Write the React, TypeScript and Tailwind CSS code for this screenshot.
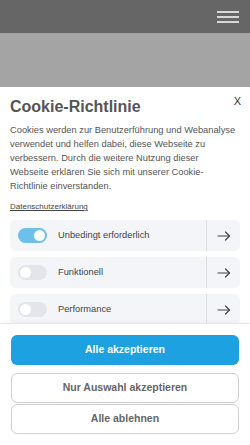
const rows = [
  { label: 'Unbedingt erforderlich', on: true },
  { label: 'Funktionell', on: false },
  { label: 'Performance', on: false },
];

function Toggle({ on }: { on: boolean }) {
  return (
    <div
      className={
        on
          ? 'w-[29px] h-[15px] rounded-full bg-[#6cc0ea] flex items-center justify-end px-[2px]'
          : 'w-[29px] h-[15px] rounded-full bg-[#e3e5eb] flex items-center justify-start px-[2px]'
      }
    >
      <div className="w-[11px] h-[11px] rounded-full bg-white" />
    </div>
  );
}

function Arrow() {
  return (
    <svg width="14" height="10" viewBox="0 0 14 10" fill="none" stroke="#444444" strokeWidth="1.2" strokeLinecap="round" strokeLinejoin="round">
      <path d="M1 5h11.5" />
      <path d="M8.5 1l4 4-4 4" />
    </svg>
  );
}

export default function App() {
  return (
    <div className="h-[445px] w-[250px] flex flex-col overflow-hidden font-['Liberation_Sans',Arial,sans-serif]">
      {/* Seitenkopf */}
      <div className="h-[33px] bg-[#666666] flex items-center justify-end pr-[11px] shrink-0">
        <div className="flex flex-col gap-[3px] w-[22px]">
          <div className="h-[2px] bg-[#d8d8d8]" />
          <div className="h-[2px] bg-[#d8d8d8]" />
          <div className="h-[2px] bg-[#d8d8d8]" />
        </div>
      </div>
      <div className="h-[54px] bg-[#a4a4a4] shrink-0" />

      {/* Cookie-Dialog */}
      <div className="flex-1 bg-white flex flex-col min-h-0">
        <div className="flex-1 min-h-0 overflow-hidden px-[10px] pt-[9px]">
          <div className="flex items-start justify-between">
            <h1 className="text-[16px] leading-[22px] font-bold text-[#555555]">Cookie-Richtlinie</h1>
            <button className="text-[11px] leading-none text-[#333333] mr-[-1px]">X</button>
          </div>
          <p className="mt-[5px] mr-[2px] text-[9.3px] leading-[14px] text-[#555555]">
            Cookies werden zur Benutzerführung und Webanalyse verwendet und helfen dabei, diese Webseite zu
            verbessern. Durch die weitere Nutzung dieser Webseite erklären Sie sich mit unserer Cookie-Richtlinie
            einverstanden.
          </p>
          <a className="block mt-[8px] text-[8px] leading-[12px] text-[#444444] underline">Datenschutzerklärung</a>

          <div className="mt-[7px] flex flex-col gap-[6px]">
            {rows.map((r) => (
              <div key={r.label} className="h-[31px] rounded-[6px] bg-[#f4f5f8] flex items-center">
                <div className="flex-1 flex items-center gap-[11px] pl-[8px]">
                  <Toggle on={r.on} />
                  <span className="text-[9.3px] text-[#444444]">{r.label}</span>
                </div>
                <div className="w-px self-stretch bg-[#dcdde2]" />
                <div className="w-[33px] flex items-center justify-center">
                  <Arrow />
                </div>
              </div>
            ))}
          </div>
        </div>

        {/* Buttons */}
        <div className="shrink-0 h-[122px] border-t border-[#e8e8e8] px-[11px] pt-[11px] flex flex-col shadow-[0_-2px_4px_rgba(0,0,0,0.03)]">
          <button className="h-[30px] rounded-[6px] bg-[#1ea1e0] text-white text-[10.5px] font-bold">
            Alle akzeptieren
          </button>
          <button className="mt-[8px] h-[30px] rounded-[6px] border border-[#d0d0d4] text-[#666666] text-[10.5px] font-bold">
            Nur Auswahl akzeptieren
          </button>
          <button className="mt-px h-[30px] rounded-[6px] border border-[#d0d0d4] text-[#666666] text-[10.5px] font-bold">
            Alle ablehnen
          </button>
        </div>
      </div>
    </div>
  );
}
